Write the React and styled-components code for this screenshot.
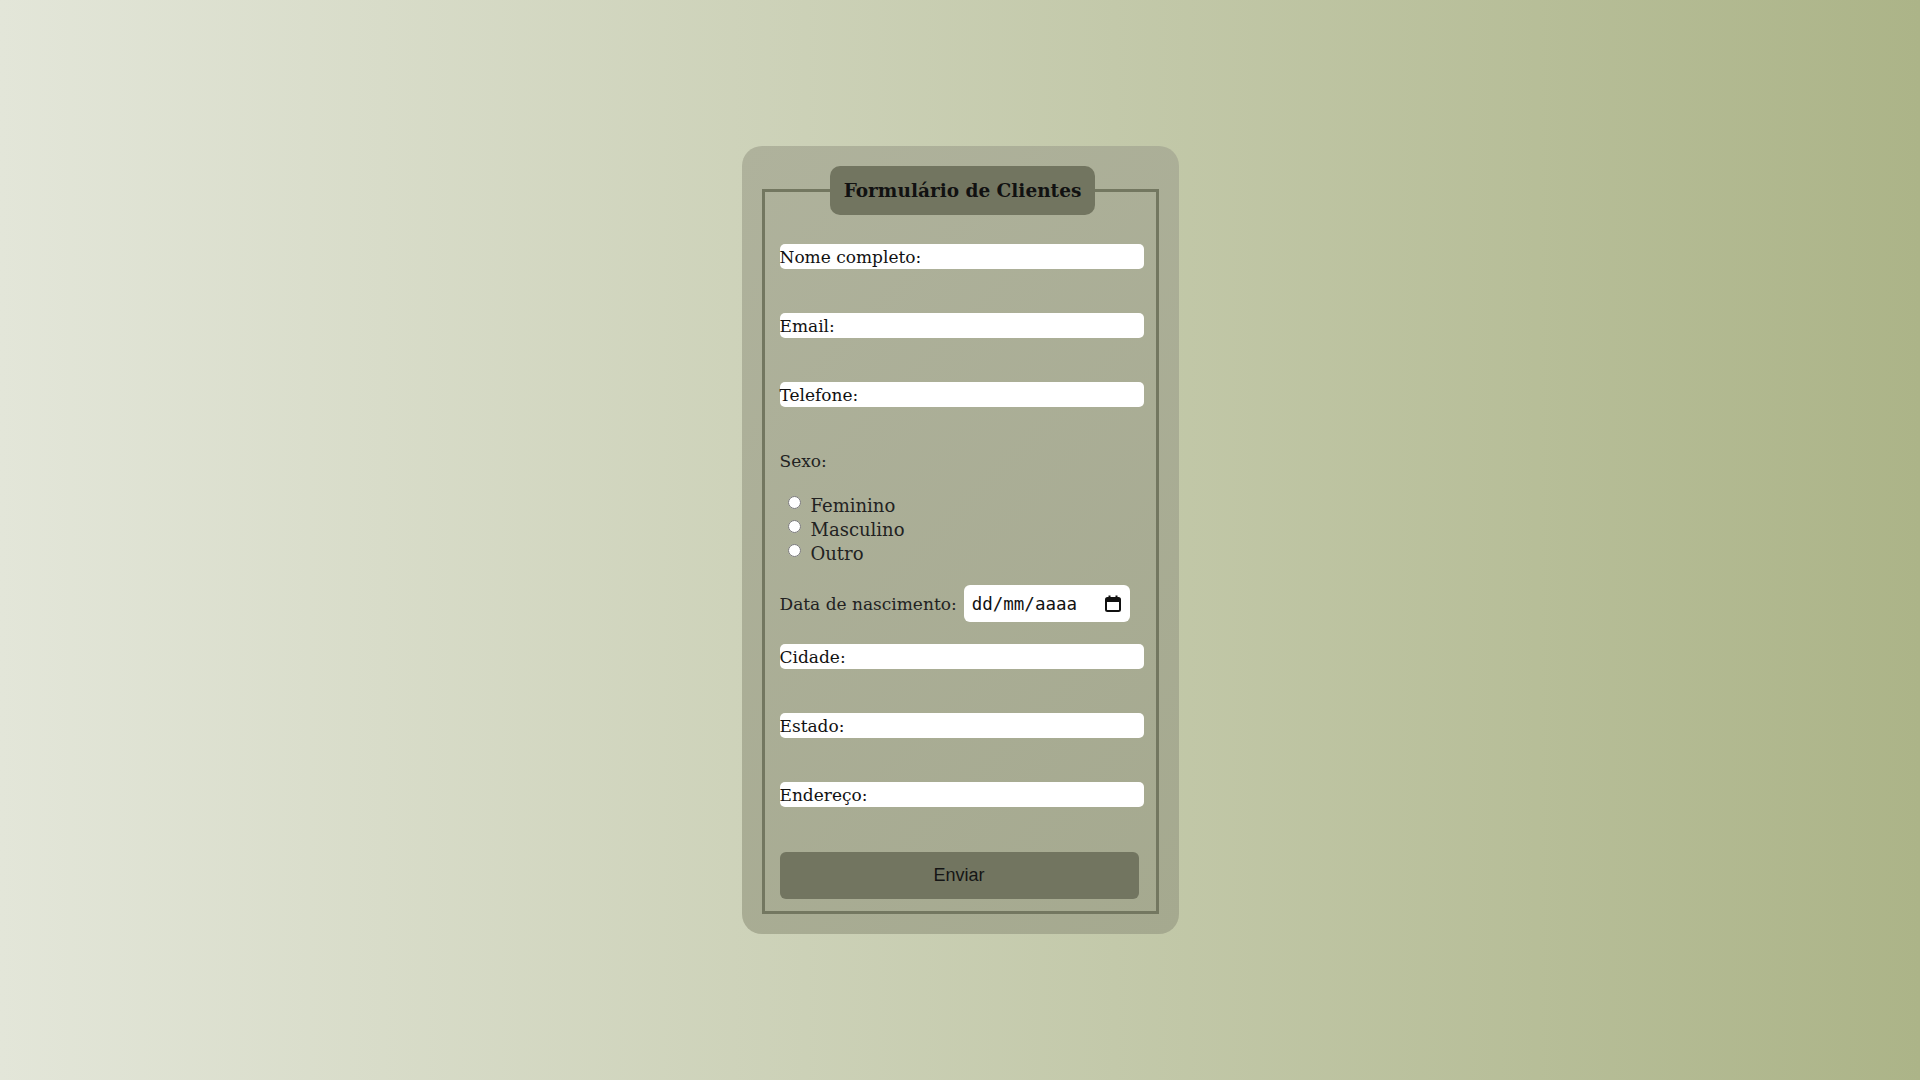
import React from 'react';
import styled, { createGlobalStyle } from 'styled-components';

const GlobalStyle = createGlobalStyle`
  html, body {
    margin: 0;
    padding: 0;
  }
  body {
    min-height: 100vh;
    background: linear-gradient(to right, #e3e6d9, #acb488);
    font-family: "DejaVu Serif", Georgia, serif;
  }
`;

const Page = styled.div`
  min-height: 100vh;
  display: flex;
  justify-content: center;
  align-items: center;
`;

const Card = styled.div`
  width: 397px;
  padding: 20px 20px 20px;
  border-radius: 20px;
  background: linear-gradient(135deg, #afb29c, #a5a98f);
`;

const Fieldset = styled.fieldset`
  margin: 0;
  padding: 0 10px 12px 15px;
  border: 3px solid #737760;
  display: flex;
  flex-direction: column;
  align-items: flex-start;
`;

const Legend = styled.legend`
  margin: 0 auto;
  padding: 12px 14px;
  background: #727560;
  border-radius: 10px;
  font-size: 18.5px;
  line-height: 25px;
  font-weight: bold;
  color: #111;
`;

const Field = styled.label`
  display: flex;
  align-items: center;
  width: 364px;
  height: 25px;
  margin-top: ${(p) => p.$top || 44}px;
  background: #fff;
  border-radius: 5px;
  font-size: 17px;
  color: #111;
  white-space: nowrap;
`;

const FieldInput = styled.input`
  flex: 1;
  min-width: 0;
  height: 100%;
  border: none;
  outline: none;
  background: transparent;
  font: inherit;
`;

const GroupTitle = styled.div`
  margin-top: 42px;
  font-size: 17px;
  line-height: 24px;
  color: #222;
`;

const RadioList = styled.div`
  margin-top: 20px;
  display: flex;
  flex-direction: column;
`;

const RadioOption = styled.label`
  display: flex;
  align-items: center;
  height: 24px;
  font-size: 18px;
  color: #222;
`;

const Radio = styled.input`
  width: 13px;
  height: 13px;
  margin: -5px 10px 0 8px;
`;

const DateRow = styled.div`
  margin-top: 20px;
  display: flex;
  align-items: center;
  gap: 7px;
  font-size: 17px;
  color: #222;
`;

const DateBox = styled.label`
  width: 166px;
  height: 37px;
  box-sizing: border-box;
  padding: 0 9px 0 8px;
  display: flex;
  align-items: center;
  justify-content: space-between;
  background: #fff;
  border-radius: 6px;
  font-family: "DejaVu Sans Mono", "Liberation Mono", monospace;
  font-size: 17.5px;
  color: #111;
`;

const SubmitButton = styled.button`
  margin-top: 45px;
  width: 359px;
  height: 47px;
  border: none;
  border-radius: 6px;
  background: #727560;
  font-family: "Liberation Sans", Arial, sans-serif;
  font-size: 18px;
  color: #151515;
  cursor: pointer;
`;

const CalendarIcon = () => (
  <svg width="16" height="17" viewBox="0 0 16 17" fill="none">
    <rect x="1" y="3" width="14" height="13" rx="1.5" stroke="#111" strokeWidth="2" />
    <rect x="1" y="3" width="14" height="4" fill="#111" />
    <rect x="3.5" y="0.5" width="2" height="3.5" fill="#111" />
    <rect x="10.5" y="0.5" width="2" height="3.5" fill="#111" />
  </svg>
);

const textFields = [
  ['nome', 'Nome completo:'],
  ['email', 'Email:'],
  ['telefone', 'Telefone:'],
];

const moreFields = [
  ['cidade', 'Cidade:'],
  ['estado', 'Estado:'],
  ['endereco', 'Endereço:'],
];

export default function App() {
  return (
    <>
      <GlobalStyle />
      <Page>
        <Card>
          <form onSubmit={(e) => e.preventDefault()}>
            <Fieldset>
              <Legend>Formulário de Clientes</Legend>

              {textFields.map(([id, label], i) => (
                <Field key={id} $top={i === 0 ? 29 : 44}>
                  {label}
                  <FieldInput name={id} type="text" />
                </Field>
              ))}

              <GroupTitle>Sexo:</GroupTitle>
              <RadioList>
                {['Feminino', 'Masculino', 'Outro'].map((s) => (
                  <RadioOption key={s}>
                    <Radio type="radio" name="sexo" value={s} />
                    {s}
                  </RadioOption>
                ))}
              </RadioList>

              <DateRow>
                Data de nascimento:
                <DateBox>
                  dd/mm/aaaa
                  <CalendarIcon />
                </DateBox>
              </DateRow>

              {moreFields.map(([id, label], i) => (
                <Field key={id} $top={i === 0 ? 22 : 44}>
                  {label}
                  <FieldInput name={id} type="text" />
                </Field>
              ))}

              <SubmitButton type="submit">Enviar</SubmitButton>
            </Fieldset>
          </form>
        </Card>
      </Page>
    </>
  );
}
